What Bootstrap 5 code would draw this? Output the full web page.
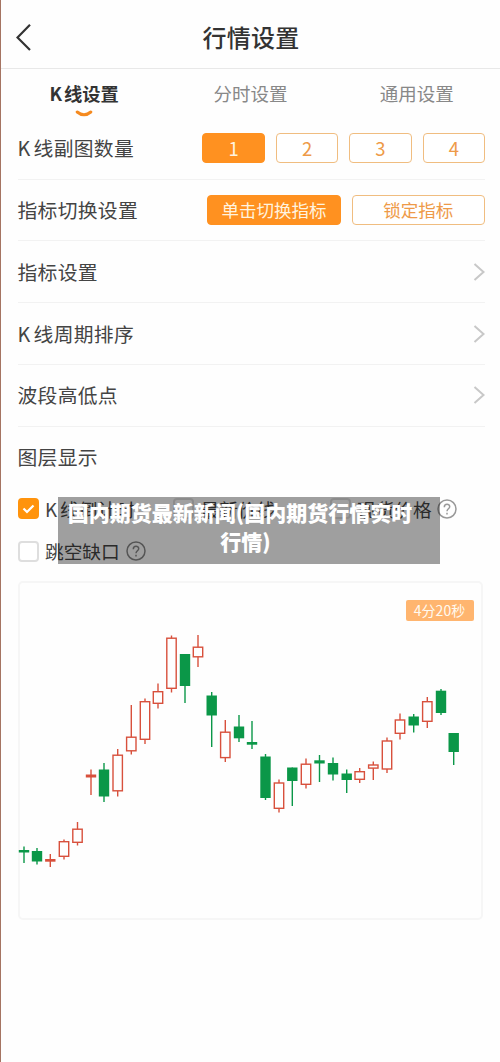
<!DOCTYPE html>
<html lang="zh-CN">
<head>
<meta charset="utf-8">
<meta name="viewport" content="width=device-width, initial-scale=1">
<title>行情设置</title>
<link href="https://cdn.jsdelivr.net/npm/bootstrap@5.3.0/dist/css/bootstrap.min.css" rel="stylesheet">
<style>
body{font-family:"Noto Sans CJK SC",sans-serif;color:#444;background:#fefefe;line-height:1}
.screen{height:1062px;border-left:1px solid #a57462;overflow:hidden}
.topbar{height:69px;border-bottom:1px solid #e8e8e8;padding:6px 0 0 15px}
.topbar h1{font-size:24px;font-weight:500;color:#333;margin:0 0 0 -30px;letter-spacing:.3px}
.back{width:16px;height:28px}
.tabs{height:48px;font-size:18.5px;color:#888}
.tabs .tab-item{padding-top:15px;line-height:19px}
.tabs .current{color:#333;font-weight:700;font-size:18.3px}
.tabs .current .latin{margin-right:2px}
.smile{width:18px;height:8px;margin-top:7px}
.settings{padding:0 16px 0 16.5px}
.setting{height:61.7px;border-bottom:1.5px solid #f2f2f2;font-size:19.8px;letter-spacing:.3px;margin-right:-1px}
.setting:first-child{height:62.8px}
.latin{margin-right:3px}
.choice{height:30px;padding:0;border:1.4px solid #f0bd80;border-radius:4px;color:#ee9a48;font-size:17.5px;line-height:26px;letter-spacing:0;background:#fff}
.choice.picked{background:#ff9120;border-color:#ff9120;color:#fff3df}
.num{width:62.4px;font-size:18.5px}.wide{width:133.4px}
.layers{font-size:18.7px}
.layer-row{height:42.5px}
.layer-row:first-child{margin-top:-.6px}
.box{width:21px;height:21px;border:2px solid #dedede;border-radius:4px;background:#fff;margin-right:6.5px}
.box.on{background:#ff930c;border-color:#ff930c}
.help{width:20px;height:20px}
.chart{width:465px;height:339px;border:2px solid #f6f6f6;border-radius:5px;margin-top:8px}
.chart svg{display:block;margin:-2px}
.timer{right:7px;top:17px;width:68px;height:21px;border-radius:2px;background:#ffb56f;color:#fffaf0;font-size:14px;line-height:20px}
.caption{left:57px;top:497px;width:382px;height:67px;background:rgba(0,0,0,.373);color:#fff;font-size:21px;font-weight:900;line-height:29px;padding:1px 18px 0 0;white-space:nowrap}
.caption .tail{padding-left:11px}
</style>
</head>
<body>
<main class="screen position-relative">
  <header class="topbar d-flex align-items-center">
    <svg class="back" viewBox="0 0 16 28" fill="none" stroke="#333" stroke-width="2.2"><path d="M14 1.8 1.5 14.5 14 27"/></svg>
    <h1 class="flex-fill text-center">行情设置</h1>
  </header>
  <nav class="tabs row g-0 text-center">
    <div class="col tab-item current d-flex flex-column align-items-center"><span><span class="latin">K</span>线设置</span>
      <svg class="smile" viewBox="0 0 18 8" fill="none" stroke="#f58a1f" stroke-width="3" stroke-linecap="round"><path d="M2.2 2Q9 7.6 15.8 2"/></svg>
    </div>
    <div class="col tab-item">分时设置</div>
    <div class="col tab-item">通用设置</div>
  </nav>
  <section class="settings">
    <div>
      <div class="setting d-flex align-items-center justify-content-between"><span><span class="latin">K</span>线副图数量</span>
        <div class="d-flex" style="gap:11px"><button class="btn choice num picked">1</button><button class="btn choice num">2</button><button class="btn choice num">3</button><button class="btn choice num">4</button></div>
      </div>
      <div class="setting d-flex align-items-center justify-content-between">指标切换设置
        <div class="d-flex" style="gap:11px"><button class="btn choice wide picked">单击切换指标</button><button class="btn choice wide">锁定指标</button></div>
      </div>
      <div class="setting d-flex align-items-center justify-content-between">指标设置
        <svg width="12" height="18" viewBox="0 0 12 18" fill="none" stroke="#c8c8c8" stroke-width="2"><path d="M1.5 1 10.5 9 1.5 17"/></svg></div>
      <div class="setting d-flex align-items-center justify-content-between"><span><span class="latin">K</span>线周期排序</span>
        <svg width="12" height="18" viewBox="0 0 12 18" fill="none" stroke="#c8c8c8" stroke-width="2"><path d="M1.5 1 10.5 9 1.5 17"/></svg></div>
      <div class="setting d-flex align-items-center justify-content-between">波段高低点
        <svg width="12" height="18" viewBox="0 0 12 18" fill="none" stroke="#c8c8c8" stroke-width="2"><path d="M1.5 1 10.5 9 1.5 17"/></svg></div>
      <div class="setting border-0 d-flex align-items-center">图层显示</div>
    </div>
    <div class="layers">
      <div class="layer-row d-flex align-items-center">
        <div class="d-flex align-items-center" style="width:155.5px"><span class="box on d-flex align-items-center justify-content-center"><svg width="13" height="10" viewBox="0 0 13 10" fill="none" stroke="#fff" stroke-width="2.2"><path d="M1.5 4.5 5 8 11.5 1.5"/></svg></span><span><span class="latin">K</span>线倒计时</span></div>
        <div class="d-flex align-items-center" style="width:156.5px"><span class="box"></span>最新价线</div>
        <div class="d-flex align-items-center"><span class="box"></span>现货价格
          <svg class="help" style="margin-left:5px" viewBox="0 0 20 20" fill="none" stroke="#999" stroke-width="1.5"><circle cx="10" cy="10" r="9"/><path d="M7.3 8.2C7.3 4.3 12.8 4.5 12.7 7.8 12.6 9.7 10 9.9 10 12.2M10 13.8V15.5"/></svg></div>
      </div>
      <div class="layer-row d-flex align-items-center"><span class="box"></span>跳空缺口
        <svg class="help" style="margin-left:6px" viewBox="0 0 20 20" fill="none" stroke="#888" stroke-width="1.5"><circle cx="10" cy="10" r="9"/><path d="M7.3 8.2C7.3 4.3 12.8 4.5 12.7 7.8 12.6 9.7 10 9.9 10 12.2M10 13.8V15.5"/></svg></div>
    </div>
    <div class="chart position-relative">
      <svg id="candles" width="465" height="339" viewBox="18 580 465 339"></svg>
      <div class="timer position-absolute text-center">4分20秒</div>
    </div>
  </section>
  <div class="caption position-absolute text-center">国内期货最新新闻(国内期货行情实时<br><span class="tail">行情)</span></div>
</main>
<script src="https://cdn.jsdelivr.net/npm/bootstrap@5.3.0/dist/js/bootstrap.bundle.min.js"></script>
<script>
// centre x, wick top, body top, body bottom, wick bottom, direction (u = hollow red, d = solid green)
const candles=[
[24,845.5,849,851.5,862,'d'],[37,847,850,860.5,863.5,'d'],[50.3,853,858,860.7,866,'u'],[64,838.5,840,856,858.5,'u'],[77.5,821,827.5,842,844.5,'u'],
[91,768.5,773.5,776.5,794,'u'],[104,762,768.5,795.5,801,'d'],[117.7,748,753.5,790.5,795.5,'u'],[131.3,704,735.5,750.5,753.5,'u'],[145,697.5,700,739,743,'u'],
[158,682.5,690,703,707.5,'u'],[171.5,634.5,636.5,688,691.5,'u'],[185,653,653,685,702,'d'],[198,634,645.5,656.5,666,'u'],[211.7,691,694.5,714.5,746,'d'],
[225.3,719,730.5,757.3,761,'u'],[239,714,725.5,737.3,741,'d'],[252,720,741,743.7,748,'d'],[265.5,753,755.5,797,799,'d'],[279,778.5,781.3,808,811.5,'u'],
[292.3,766.5,766.5,780,805,'d'],[306,757.5,762.5,784,787.5,'u'],[319.5,754,759.3,762.5,781,'d'],[333,756.5,762,773.5,779.5,'d'],[346.7,768.5,772.5,779,792,'d'],
[359.7,767,770,779,782,'u'],[373.3,760.5,763.3,767.8,779,'u'],[387,736.5,739.3,768.7,772,'u'],[400,712.5,718.3,733,738.5,'u'],[413.7,713,715.5,724.5,731.5,'d'],
[427.3,696,700,721,727,'u'],[441,688,689.7,712,714,'d'],[453.7,732,732,751,764,'d']];
document.getElementById('candles').innerHTML=candles.map(([x,h,t,b,l,k])=>{
  const c=k==='u'?'#d8503c':'#0b9748';
  const hollow=k==='u'&&b-t>4;
  const body=hollow?`<rect x="${x-4.7}" y="${t+.7}" width="9.4" height="${b-t-1.4}" fill="#fefefe" stroke="${c}" stroke-width="1.4"/>`
    :`<rect x="${x-5.2}" y="${t}" width="10.4" height="${b-t}" fill="${c}"/>`;
  return `<path d="M${x} ${h}V${l}" stroke="${c}" stroke-width="1.4"/>${body}`;
}).join('');
</script>
</body>
</html>
